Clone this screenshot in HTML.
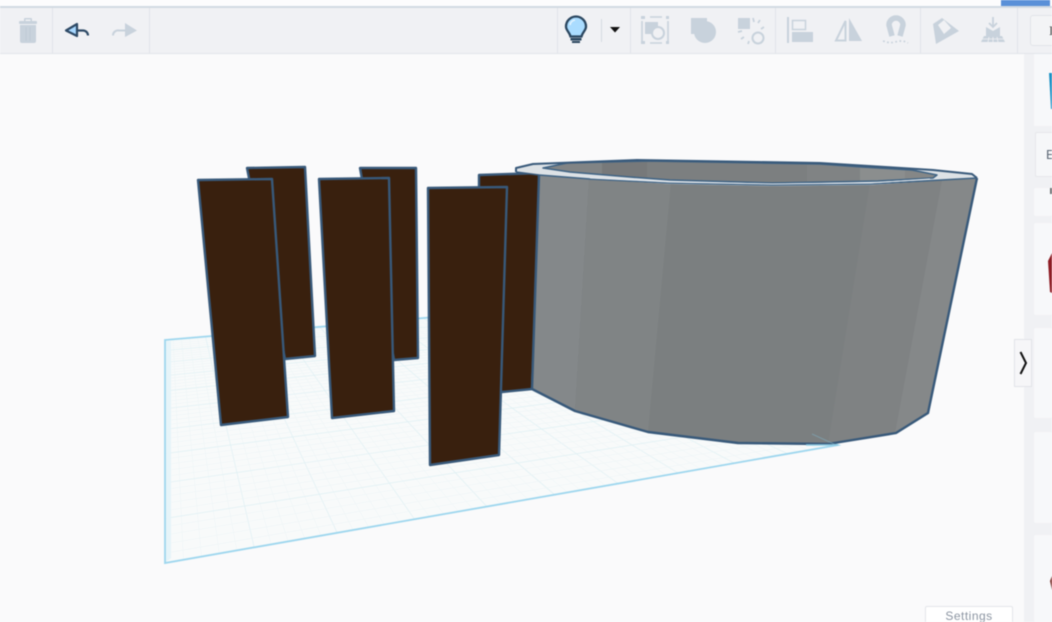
<!DOCTYPE html>
<html><head><meta charset="utf-8">
<style>
html,body{margin:0;padding:0;background:#fafafb;width:1052px;height:622px;overflow:hidden}
#wrap{width:1052px;height:622px;overflow:hidden;position:relative;font-family:"Liberation Sans",sans-serif;filter:blur(.45px)}
svg{position:absolute;left:0;top:0}
#settings{position:absolute;left:925px;top:606px;width:88px;height:20px;background:#fff;border:1px solid #e3e5e9;border-radius:2px;box-sizing:border-box;text-align:center;color:#8b94a1;font-size:12px;line-height:18px;letter-spacing:.5px}
#tip{position:absolute;left:1035px;top:132px;width:30px;height:45px;background:#f6f7f9;border:1px solid #e6e7ea;border-radius:2px;box-sizing:border-box;color:#5d6876;font-size:13px;line-height:44px;padding-left:10px}
#btn{position:absolute;left:1030px;top:15px;width:40px;height:31px;background:#f3f4f6;border:1px solid #e2e4e8;border-radius:3px;box-sizing:border-box;color:#444;font-size:13px;line-height:29px;padding-left:18px;font-family:"Liberation Serif",serif}
</style></head><body><div id="wrap">
<svg width="1052" height="622" viewBox="0 0 1052 622">
<!-- top bar -->
<rect x="0" y="0" width="1052" height="6" fill="#fcfcfd"/>
<rect x="1001" y="0" width="49" height="6" fill="#5a90d8"/>
<rect x="0" y="6" width="1052" height="2" fill="#d2dae2"/>
<rect x="0" y="8" width="1052" height="45" fill="#f0f1f4"/>
<rect x="0" y="53" width="1052" height="1" fill="#e2e5ea"/>
<g fill="#e0e4e9"><rect x="52" y="8" width="1" height="45"/><rect x="149" y="8" width="1" height="45"/><rect x="557" y="8" width="1" height="45"/><rect x="630" y="8" width="1" height="45"/><rect x="775" y="8" width="1" height="45"/><rect x="920" y="8" width="1" height="45"/><rect x="1017" y="8" width="1" height="45"/></g>
<!-- right panel -->
<rect x="1024" y="54" width="28" height="568" fill="#f0f1f4"/>
<g fill="#f7f8fa"><rect x="1034" y="54" width="18" height="72"/><rect x="1034" y="188" width="18" height="28" rx="2"/><rect x="1034" y="223" width="18" height="92" rx="2"/><rect x="1034" y="328" width="18" height="90" rx="2"/><rect x="1034" y="432" width="18" height="91" rx="2"/><rect x="1034" y="535" width="18" height="87" rx="2"/></g>
<polygon points="1049,73 1052,73 1052,109 1051,109" fill="#1b90c4"/>
<rect x="1050" y="188" width="2" height="6" fill="#6c6f72"/>
<polygon points="1052,253 1048,261 1050,292 1052,293" fill="#8e1c24"/>
<polygon points="1052,576 1050,581 1052,590" fill="#7a2d28"/>
<!-- plate -->
<polygon points="165,340 518,310 838,445 165,563" fill="#f8fafa"/>
<g id="grid" fill="none"></g>
<polygon points="166,341 171,341 171,558 166,562" fill="#e6f4f9"/>
<polygon points="165,340 518,310 838,445 165,563" fill="none" stroke="#9dd6ee" stroke-width="1.8"/>
<!-- back panels -->
<g stroke="#38597a" stroke-width="2.4" stroke-linejoin="round" fill="#39200e">
<polygon points="247,168 305,167 315,356 285,359"/>
<polygon points="360,168 416,168 418,358 394,360"/>
<polygon points="479,175 541,173 532,389 502,392 479,392"/>
</g>
<!-- front panels -->
<g stroke="#38597a" stroke-width="2.4" stroke-linejoin="round" fill="#39200e">
<polygon points="198,180 272,179 288,417 221,425"/>
<polygon points="319,179 389,178 394,411 332,418"/>
<polygon points="428,188 507,187 499,455 430,465"/>
</g>
<!-- cylinder body -->
<polygon points="539,175 590,178 670,182 772,184 870,183 977,178 928,413 896,433 828,444 738,443 648,432 575,411 532,389" fill="#7b7f80"/>
<polygon points="539,175 589,179 575,411 532,389" fill="#84888a"/>
<polygon points="589,179 671,182 648,432 575,411" fill="#808485"/>
<polygon points="870,183 942,180 895,433 828,444" fill="#7f8283"/>
<polygon points="942,180 977,178 928,413 895,433" fill="#858889"/>
<!-- rim -->
<polygon points="516,168 533,164 637,160 820,163 933,170 972,174 977,178 870,185 772,186 670,184 590,179 539,175 516,172" fill="#dde2e6"/>
<!-- hole -->
<polygon points="543,168 567,163 647,161 820,164 862,167 912,170 937,175 933,178 878,181 772,183 670,180 630,177 570,172" fill="#7c7f80"/>
<polygon points="543,168 567,163 602,162 602,175 570,172" fill="#818485"/>
<polygon points="602,162 647,161 647,178 602,175" fill="#77797a"/>
<polygon points="807,164 860,167 860,182 807,183" fill="#808384"/>
<polygon points="860,167 905,170 905,180 860,182" fill="#8b8e8e"/>
<polygon points="905,170 912,170 937,175 933,178 905,180" fill="#858787"/>
<polygon points="543,168 567,163 647,161 820,164 862,167 912,170 937,175 933,178 878,181 772,183 670,180 630,177 570,172" fill="none" stroke="#3f6384" stroke-width="1.5" stroke-linejoin="round"/>
<polyline points="539,175 590,179 670,183 772,185 870,184 977,178" fill="none" stroke="#3f6384" stroke-width="1.5"/>
<polyline points="590,178 670,182 772,184 870,183 930,179" fill="none" stroke="#e4e9ee" stroke-width="1"/>
<polyline points="516,172 516,168 533,164 637,160 820,163 933,170 972,174 977,178" fill="none" stroke="#38597a" stroke-width="2" stroke-linejoin="round"/>
<polyline points="516,172 539,175" fill="none" stroke="#38597a" stroke-width="1.5"/>
<polyline points="539,175 532,389 575,411 648,432 738,443 828,444 896,433 928,413 977,178" fill="none" stroke="#38597a" stroke-width="2.4" stroke-linejoin="round"/>
<line x1="812" y1="434" x2="836" y2="445" stroke="#7fb4c9" stroke-width="1" opacity=".5"/>
<line x1="806" y1="445" x2="838" y2="445" stroke="#8fcbe2" stroke-width="1.6"/>
<!-- chevron tab -->
<rect x="1014.5" y="339.5" width="17" height="47" fill="#f6f6f8" stroke="#e2e4e8"/>
<polyline points="1020.5,352 1026,363 1020.5,374" fill="none" stroke="#111" stroke-width="2"/>
<!-- trash -->
<g fill="#c8d2dc"><path d="M20 25h16v16a2 2 0 0 1-2 2H22a2 2 0 0 1-2-2z"/><rect x="19" y="21" width="18" height="3" rx="1"/><path d="M24 21v-2a1 1 0 0 1 1-1h6a1 1 0 0 1 1 1v2h-1.500v-1.500h-5V21z"/></g>
<g stroke="#bcc8d2" stroke-width=".7"><line x1="26" y1="27" x2="26" y2="41"/><line x1="30" y1="27" x2="30" y2="41"/></g>
<!-- undo -->
<path d="M77 24L66 30.500L77 36z" fill="#a8d8ff" stroke="#2e4a66" stroke-width="2.200" stroke-linejoin="round"/>
<path d="M77 30.500h6a5 5 0 0 1 5 5" fill="none" stroke="#2e4a66" stroke-width="2.200"/>
<!-- redo -->
<path d="M125 23L137 30.500L125 37z" fill="#c8d2dc"/>
<path d="M126 30.500h-7a5 5 0 0 0-6 5" fill="none" stroke="#c8d2dc" stroke-width="2"/>
<!-- bulb -->
<path d="M576 16.500a10 10 0 0 1 10 10c0 4-3.500 5.500-4.500 10h-11c-1-4.500-4.500-6-4.500-10a10 10 0 0 1 10-10z" fill="#aadcff" stroke="#2b4760" stroke-width="2.300"/>
<path d="M570 25a6 6 0 0 1 5-5" fill="none" stroke="#e4f4ff" stroke-width="1.600"/>
<rect x="570.500" y="38" width="11" height="2.500" fill="#2b4760"/><rect x="572" y="41" width="8" height="2" fill="#2b4760"/>
<rect x="601" y="19" width="1" height="23" fill="#d5dbe2"/>
<polygon points="610,27 620,27 615,32.500" fill="#111"/>
<!-- group with border -->
<g fill="none" stroke="#c8d2dc" stroke-width="1.600"><path d="M650 17h12M642 21v20M668 21v20M650 43h12"/></g>
<g fill="#c8d2dc"><rect x="641" y="16" width="4" height="3"/><rect x="666" y="16" width="3" height="3"/><rect x="641" y="41" width="4" height="3"/><rect x="666" y="41" width="3" height="3"/><rect x="645" y="22" width="13" height="12"/></g>
<circle cx="658" cy="33" r="6" fill="#f0f1f4" stroke="#c8d2dc" stroke-width="2"/>
<!-- solid group -->
<rect x="691" y="18" width="16" height="16" fill="#c8d2dc"/><circle cx="705" cy="32" r="11" fill="#c8d2dc"/>
<!-- ungroup -->
<rect x="738" y="18" width="12" height="11" fill="#c8d2dc"/>
<circle cx="758" cy="38" r="5.500" fill="none" stroke="#c8d2dc" stroke-width="2"/>
<g stroke="#c8d2dc" stroke-width="1.700" fill="none"><path d="M753 18l1 4M760 20l-2 3M764 27l-3 2M738 32l4-1M741 39l3-2M748 44l1-3"/></g>
<!-- align -->
<rect x="787" y="17" width="2" height="26" fill="#c8d2dc"/>
<rect x="792.500" y="20.500" width="13" height="9" fill="none" stroke="#c8d2dc" stroke-width="1.500"/>
<rect x="792" y="32" width="21" height="10" fill="#c8d2dc"/>
<!-- mirror -->
<path d="M845.500 21v19.500h-9.500z" fill="none" stroke="#c8d2dc" stroke-width="2"/>
<path d="M849 18l13 23h-13z" fill="#c8d2dc"/>
<!-- magnet -->
<path d="M892 36L889 25a7 7 0 0 1 14 0L900 36" fill="none" stroke="#c8d2dc" stroke-width="5.500"/>
<path d="M883 41c6 2 8 2 12 1s8-2 13 1" fill="none" stroke="#c8d2dc" stroke-width="1.700" stroke-dasharray="1.700 2.500"/>
<!-- workplane -->
<path d="M933 24L942 18L959 31L936 44z" fill="#c8d2dc"/>
<path d="M938 25l6-5 7 8-7 6z" fill="#f0f1f4"/>
<!-- drop -->
<path d="M993 17v9M989 23l4 4 4-4" fill="none" stroke="#c8d2dc" stroke-width="1.800"/>
<path d="M986 27l7 4 7-4v10h-14z" fill="#c8d2dc"/>
<path d="M984 36h18l3 6h-24z" fill="#c8d2dc"/>
<g stroke="#f0f1f4" stroke-width=".8"><line x1="982" y1="39" x2="1004" y2="39"/><line x1="989" y1="37" x2="988" y2="42"/><line x1="993" y1="37" x2="993" y2="42"/><line x1="997" y1="37" x2="998" y2="42"/></g>
</svg>
<div id="btn">I</div>
<div id="tip">E</div>
<div id="settings">Settings</div>
</div>
<script>
(function(){
var A=[165,340],B=[518,310],C=[838,445],D=[165,563];
var dx1=B[0]-C[0],dx2=D[0]-C[0],sx=A[0]-B[0]+C[0]-D[0];
var dy1=B[1]-C[1],dy2=D[1]-C[1],sy=A[1]-B[1]+C[1]-D[1];
var det=dx1*dy2-dx2*dy1;
var g=(sx*dy2-dx2*sy)/det,h=(dx1*sy-sx*dy1)/det;
var a=B[0]-A[0]+g*B[0],b=D[0]-A[0]+h*D[0],c=A[0];
var d=B[1]-A[1]+g*B[1],e=D[1]-A[1]+h*D[1],f=A[1];
function P(u,v){var w=g*u+h*v+1;return ((a*u+b*v+c)/w).toFixed(1)+","+((d*u+e*v+f)/w).toFixed(1);}
var s="",n=50;
for(var i=1;i<n;i++){var t=i/n,m=i%5==0;
var col=m?"#dff0f4":"#edf5f7",w=m?"0.7":"0.5";
s+='<polyline points="'+P(t,0)+' '+P(t,1)+'" stroke="'+col+'" stroke-width="'+w+'"/>';
s+='<polyline points="'+P(0,t)+' '+P(1,t)+'" stroke="'+col+'" stroke-width="'+w+'"/>';}
document.getElementById("grid").innerHTML=s;
})();
</script>
</body></html>
